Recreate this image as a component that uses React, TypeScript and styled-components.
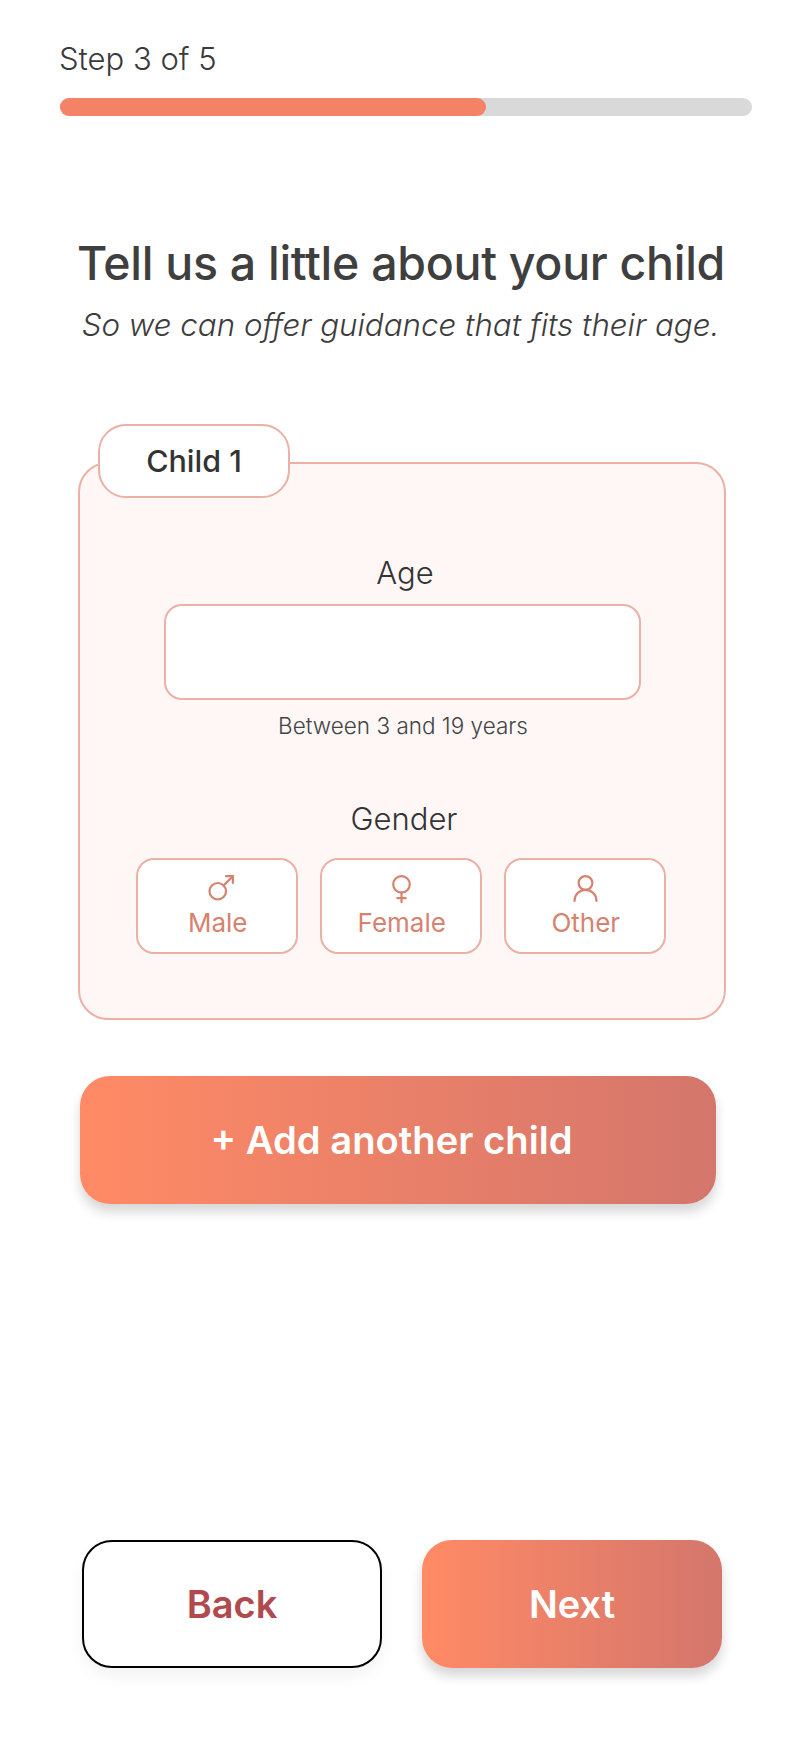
import styled, { createGlobalStyle } from "styled-components";
import { Mars, UserRound, Venus } from "lucide-react";

const GlobalStyle = createGlobalStyle`
    * {
        box-sizing: border-box;
    }
    html, body {
        margin: 0;
        background: #fff;
    }
    body {
        font-family: "Inter", "Liberation Sans", sans-serif;
    }
`;

const MaleIcon = styled(Mars)`
    margin-left: 5px;
`;

const genders = [
    { label: "Male", icon: <MaleIcon size={33} strokeWidth={1.6} /> },
    { label: "Female", icon: <Venus size={33} strokeWidth={1.6} /> },
    { label: "Other", icon: <UserRound size={33} strokeWidth={1.6} /> },
];

export default function App() {
    return (
        <Page>
            <GlobalStyle />
            <StepLabel>Step 3 of 5</StepLabel>
            <Track>
                <Fill />
            </Track>
            <Title>Tell us a little about your child</Title>
            <Subtitle>So we can offer guidance that fits their age.</Subtitle>

            <Card>
                <Tab>Child 1</Tab>
                <FieldLabel>Age</FieldLabel>
                <AgeInput type="text" aria-label="Age" />
                <Hint>Between 3 and 19 years</Hint>
                <GenderLabel>Gender</GenderLabel>
                <GenderRow>
                    {genders.map((g) => (
                        <GenderButton key={g.label}>
                            {g.icon}
                            <span>{g.label}</span>
                        </GenderButton>
                    ))}
                </GenderRow>
            </Card>

            <AddButton>+ Add another child</AddButton>

            <Nav>
                <BackButton>Back</BackButton>
                <NextButton>Next</NextButton>
            </Nav>
        </Page>
    );
}

const Page = styled.div`
    width: 804px;
    height: 1748px;
    padding-top: 41px;
    overflow: hidden;
    background: #fff;
`;
const StepLabel = styled.div`
    margin-left: 59px;
    font-size: 31px;
    line-height: 36px;
    font-weight: 300;
    color: #3a3a3a;
`;
const Track = styled.div`
    width: 692px;
    height: 18px;
    margin: 21px 0 0 60px;
    border-radius: 9px;
    background: #d9d9d9;
`;
const Fill = styled.div`
    width: 426px;
    height: 100%;
    border-radius: 9px;
    background: #f48267;
`;
const Title = styled.h1`
    width: 804px;
    margin: 119px 0 0;
    padding-right: 2px;
    font-size: 46.5px;
    line-height: 56px;
    font-weight: 500;
    letter-spacing: -0.3px;
    text-align: center;
    color: #3f3f3f;
`;
const Subtitle = styled.p`
    width: 804px;
    margin: 14px 0 0;
    padding-right: 3px;
    font-size: 31.3px;
    line-height: 40px;
    font-style: italic;
    font-weight: 300;
    text-align: center;
    color: #3d3d3d;
`;
const Card = styled.section`
    position: relative;
    width: 648px;
    height: 558px;
    margin: 117px 0 0 78px;
    padding-top: 91px;
    border: 2px solid #ebb0a6;
    border-radius: 30px;
    background: #fef7f6;
`;
const Tab = styled.div`
    position: absolute;
    left: 18px;
    top: -40px;
    display: flex;
    align-items: center;
    justify-content: center;
    width: 192px;
    height: 74px;
    padding-bottom: 2px;
    border: 2px solid #ebb0a6;
    border-radius: 28px;
    background: #fff;
    font-size: 30.5px;
    font-weight: 500;
    color: #333;
`;
const FieldLabel = styled.div`
    padding-left: 6px;
    font-size: 31px;
    line-height: 36px;
    font-weight: 300;
    text-align: center;
    color: #333;
`;
const AgeInput = styled.input`
    display: block;
    width: 477px;
    height: 96px;
    margin: 13px 0 0 84px;
    border: 2px solid #ebb0a6;
    border-radius: 18px;
    background: #fff;
    outline: none;
`;
const Hint = styled.div`
    margin-top: 11px;
    padding-left: 2px;
    font-size: 22.5px;
    line-height: 30px;
    font-weight: 300;
    text-align: center;
    color: #444;
`;
const GenderLabel = styled(FieldLabel)`
    margin-top: 60px;
    padding-left: 4px;
`;
const GenderRow = styled.div`
    display: grid;
    grid-template-columns: repeat(3, 161.5px);
    gap: 22.5px;
    margin: 21px 0 0 56px;
`;
const GenderButton = styled.button`
    display: flex;
    flex-direction: column;
    align-items: center;
    justify-content: center;
    gap: 2px;
    height: 96px;
    padding: 0 0 2px 2px;
    border: 2px solid #ebb0a6;
    border-radius: 18px;
    background: #fff;
    font-family: inherit;
    font-size: 26px;
    line-height: 32px;
    color: #d6826f;
`;
const CtaButton = styled.button`
    display: flex;
    align-items: center;
    justify-content: center;
    height: 128px;
    border: none;
    border-radius: 30px;
    background: linear-gradient(90deg, #ff8a65 0%, #d4766c 100%);
    box-shadow: 0 8px 12px rgba(0, 0, 0, 0.16);
    font-family: inherit;
    font-weight: 600;
    color: #fff;
`;
const AddButton = styled(CtaButton)`
    width: 636px;
    margin: 56px 0 0 80px;
    padding-right: 19px;
    font-size: 38.2px;
`;
const Nav = styled.div`
    display: flex;
    gap: 40px;
    margin: 336px 0 0 82px;
`;
const NextButton = styled(CtaButton)`
    width: 300px;
    font-size: 38px;
`;
const BackButton = styled(NextButton)`
    border: 2px solid #000;
    background: #fff;
    box-shadow: 0 8px 16px rgba(0, 0, 0, 0.05);
    color: #b04a4e;
`;
